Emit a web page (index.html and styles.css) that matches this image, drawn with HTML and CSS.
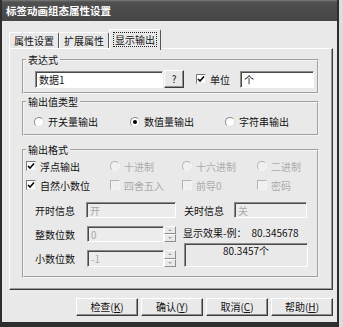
FILE: index.html
```html
<!DOCTYPE html>
<html lang="zh-CN">

<head>
  <meta charset="UTF-8">
  <title>标签动画组态属性设置</title>
  <link rel="stylesheet" href="styles.css">
</head>

<body>
  <div class="window">
    <div class="titlebar">标签动画组态属性设置</div>

    <div class="client">
      <div class="tabs">
        <div class="tab">属性设置</div>
        <div class="tab">扩展属性</div>
        <div class="tab active"><span class="focus">显示输出</span></div>
      </div>

      <div class="panel">
        <!-- 表达式 -->
        <fieldset class="group">
          <legend>表达式</legend>
          <div class="group-body expr-body">
            <div class="edit expr-edit">数据1</div>
            <div class="btn btn-q">?</div>
            <div class="option unit-option">
              <span class="check"><svg width="8" height="8" viewBox="0 0 8 8"><polyline points="1,4 3,6 7,1.5" /></svg></span>单位
            </div>
            <div class="edit unit-edit">个</div>
          </div>
        </fieldset>

        <!-- 输出值类型 -->
        <fieldset class="group">
          <legend>输出值类型</legend>
          <div class="group-body type-body">
            <div class="option"><span class="radio"></span>开关量输出</div>
            <div class="option"><span class="radio checked"></span>数值量输出</div>
            <div class="option"><span class="radio"></span>字符串输出</div>
          </div>
        </fieldset>

        <!-- 输出格式 -->
        <fieldset class="group">
          <legend>输出格式</legend>
          <div class="group-body format-body">
            <div class="opts">
              <div class="option"><span class="check"><svg width="8" height="8" viewBox="0 0 8 8"><polyline points="1,4 3,6 7,1.5" /></svg></span>浮点输出</div>
              <div class="option disabled"><span class="radio"></span>十进制</div>
              <div class="option disabled"><span class="radio"></span>十六进制</div>
              <div class="option disabled"><span class="radio"></span>二进制</div>
              <div class="option"><span class="check"><svg width="8" height="8" viewBox="0 0 8 8"><polyline points="1,4 3,6 7,1.5" /></svg></span>自然小数位</div>
              <div class="option disabled"><span class="check"></span>四舍五入</div>
              <div class="option disabled"><span class="check"></span>前导0</div>
              <div class="option disabled"><span class="check"></span>密码</div>
            </div>

            <div class="fields">
              <div class="field-label">开时信息</div>
              <div class="edit edit-off on-edit">开</div>
              <div class="field-label">关时信息</div>
              <div class="edit edit-off off-edit">关</div>

              <div class="field-label">整数位数</div>
              <div class="spin">
                <div class="edit edit-off spin-edit">0</div>
                <div class="spin-btns"><span class="arrow up"></span><span class="arrow down"></span></div>
              </div>
              <div class="preview">
                <div class="preview-line">显示效果-例：<span class="preview-value">80.345678</span></div>
                <div class="preview-box">80.3457个</div>
              </div>

              <div class="field-label">小数位数</div>
              <div class="spin">
                <div class="edit edit-off spin-edit">-1</div>
                <div class="spin-btns"><span class="arrow up"></span><span class="arrow down"></span></div>
              </div>
            </div>
          </div>
        </fieldset>
      </div>

      <div class="buttons">
        <div class="btn btn-cmd">检查(<u>K</u>)</div>
        <div class="btn btn-cmd">确认(<u>Y</u>)</div>
        <div class="btn btn-cmd">取消(<u>C</u>)</div>
        <div class="btn btn-cmd">帮助(<u>H</u>)</div>
      </div>
    </div>
  </div>
</body>

</html>
```

FILE: styles.css
```css
html,
body {
  margin: 0;
  height: 100%;
  background: #dcdcdc;
}

body {
  font-family: "Noto Sans CJK SC", "Noto Sans", sans-serif;
  font-size: 10px;
  color: #111;
}

.window {
  width: 339px;
  height: 327px;
  box-sizing: border-box;
  border-left: 2px solid #2e2e2e;
  border-right: 2px solid #2e2e2e;
  border-bottom: 5px solid #2e2e2e;
  display: flex;
  flex-direction: column;
}

.titlebar {
  height: 21px;
  box-sizing: border-box;
  padding: 3px 0 0 4px;
  line-height: 16px;
  font-size: 10.5px;
  font-weight: bold;
  color: #fff;
  background: linear-gradient(to bottom, #7c7c7c 0, #505050 2px, #464646 100%);
}

.client {
  flex: 1;
  background: #e9e9e9;
  padding: 8px 4px 0 7px;
}

/* tabs */
.tabs {
  display: flex;
  align-items: flex-end;
  height: 19px;
}

.tab {
  height: 16px;
  box-sizing: border-box;
  padding: 0 4px;
  line-height: 15px;
  border: 1px solid;
  border-color: #fff #555 transparent #fff;
  border-bottom: none;
  border-radius: 2px 2px 0 0;
}

.tab.active {
  position: relative;
  z-index: 1;
  height: 21px;
  margin: 0 -2px -2px 0;
  padding: 2px 4px 0;
  background: #e9e9e9;
}

.focus {
  display: inline-block;
  line-height: 13px;
  padding: 0 1px;
  outline: 1px dotted #222;
}

.panel {
  height: 242px;
  box-sizing: border-box;
  border: 1px solid;
  border-color: #fff #3c3c3c #3c3c3c #fff;
  box-shadow: inset -1px -1px 0 #9a9a9a;
  padding: 3px 0 0 12px;
}

/* group boxes */
.group {
  width: 297px;
  box-sizing: border-box;
  margin: 0;
  padding: 0;
  border: 2px groove #f4f4f4;
}

.group + .group {
  margin-top: 0;
}

.group:last-child {
  margin-top: 6px;
}

legend {
  margin-left: 2px;
  padding: 0 2px;
  line-height: 16px;
}

.group-body {
  display: flex;
  align-items: center;
}

.expr-body {
  height: 18px;
  padding: 2px 0 4px 11px;
}

.type-body {
  display: grid;
  grid-template-columns: 96px 95px auto;
  height: 14px;
  padding: 4px 0 6px 10px;
}

.format-body {
  display: block;
  padding: 0 0 9px 2px;
}

/* inputs */
.edit {
  height: 17px;
  box-sizing: border-box;
  background: #fff;
  border: 1px solid;
  border-color: #8a8a8a #fff #fff #8a8a8a;
  box-shadow: inset 1px 1px 0 #4a4a4a;
  padding: 0 0 0 3px;
  line-height: 15px;
}

.edit-off {
  background: #ececec;
  color: #a8a8a8;
}

.expr-edit {
  width: 128px;
}

.unit-edit {
  width: 74px;
  margin-left: 10px;
}

.btn {
  box-sizing: border-box;
  background: #e9e9e9;
  border: 1px solid;
  border-color: #fff #3c3c3c #3c3c3c #fff;
  box-shadow: inset -1px -1px 0 #8e8e8e;
  text-align: center;
}

.btn-q {
  width: 20px;
  height: 18px;
  margin-left: 1px;
  line-height: 15px;
}

/* check / radio */
.option {
  display: flex;
  align-items: center;
  gap: 4px;
  white-space: nowrap;
}

.unit-option {
  margin-left: 12px;
}

.check,
.radio {
  flex: none;
  width: 10px;
  height: 10px;
  box-sizing: border-box;
  background: #fff;
  border: 1px solid;
  border-color: #7a7a7a #e8e8e8 #e8e8e8 #7a7a7a;
  display: flex;
  align-items: center;
  justify-content: center;
}

.check svg polyline {
  fill: none;
  stroke: #000;
  stroke-width: 1.6;
}

.radio {
  border-radius: 50%;
  border-color: #8a8a8a #dcdcdc #dcdcdc #8a8a8a;
}

.radio.checked::after {
  content: "";
  width: 4px;
  height: 4px;
  border-radius: 50%;
  background: #000;
}

.disabled {
  color: #ababab;
}

.disabled .check,
.disabled .radio {
  background: #f0f0f0;
  border-color: #b4b4b4 #f4f4f4 #f4f4f4 #b4b4b4;
}

.opts {
  display: grid;
  grid-template-columns: 84px 72px 75px auto;
  grid-auto-rows: 16px;
  row-gap: 3px;
}

/* fields */
.fields {
  display: grid;
  grid-template-columns: 52px 97px 51px 74px;
  grid-template-rows: 16px 16px 17px;
  row-gap: 8px;
  margin: 9px 0 0 8px;
  align-items: center;
}

.field-label {
  padding-left: 1px;
}

.on-edit {
  width: 90px;
  height: 16px;
}

.off-edit {
  width: 73px;
  height: 16px;
}

.spin {
  display: flex;
  width: 89px;
  height: 100%;
  margin-left: 1px;
}

.spin-edit {
  flex: 1;
  height: 100%;
}

.spin-btns {
  width: 12px;
  display: flex;
  flex-direction: column;
}

.arrow {
  flex: 1;
  background: #e9e9e9;
  border: 1px solid;
  border-color: #fff #8e8e8e #8e8e8e #fff;
  display: flex;
  align-items: center;
  justify-content: center;
}

.arrow::after {
  content: "";
  border-left: 2px solid transparent;
  border-right: 2px solid transparent;
}

.arrow.up::after {
  border-bottom: 2px solid #a8a8a8;
}

.arrow.down::after {
  border-top: 2px solid #a8a8a8;
}

.preview {
  grid-column: 3 / 5;
  grid-row: 2 / 4;
  align-self: stretch;
  display: flex;
  flex-direction: column;
}

.preview-line {
  height: 17px;
  line-height: 14px;
}

.preview-value {
  margin-left: 5px;
}

.preview-box {
  flex: 1;
  width: 124px;
  margin-left: 1px;
  box-sizing: border-box;
  border: 1px solid;
  border-color: #8a8a8a #fff #fff #8a8a8a;
  box-shadow: inset 1px 1px 0 #4a4a4a;
  text-align: center;
  line-height: 13px;
}

/* command buttons */
.buttons {
  display: flex;
  justify-content: flex-end;
  gap: 3px;
  margin-top: 8px;
}

.btn-cmd {
  width: 62px;
  height: 18px;
  line-height: 15px;
}
```
